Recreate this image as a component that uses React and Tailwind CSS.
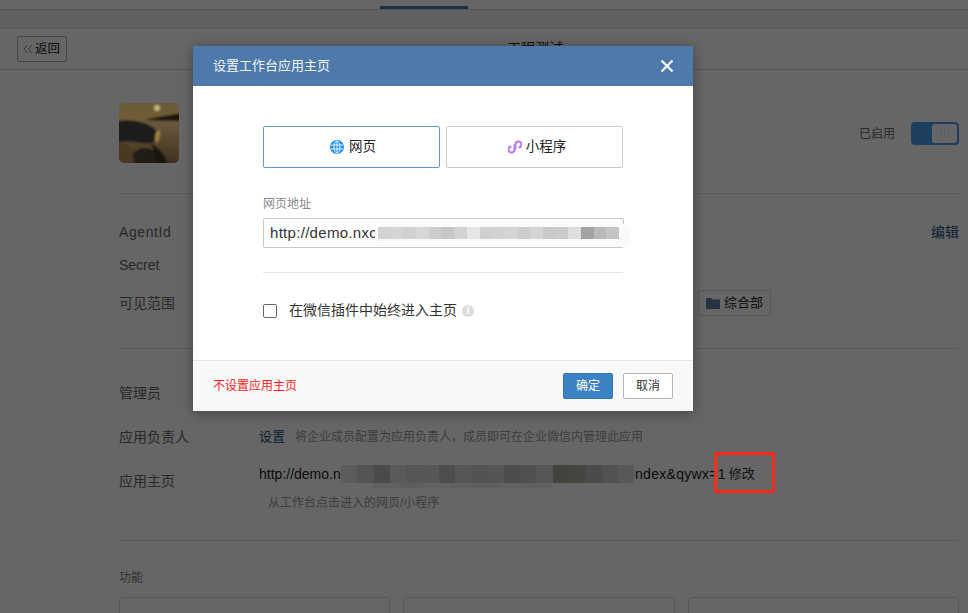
const font = { fontFamily: '"Liberation Sans", "Noto Sans CJK SC", sans-serif' };

const inputBlur = ['#d3d3d3', '#d5d5d5', '#d0d0d0', '#d8d8d8', '#cdcdcd', '#c6c6c6', '#d2d2d2', '#e6e6e6', '#cfcfcf', '#d1d1d1', '#d5d5d5', '#cdcdcd', '#d5d5d5', '#c9c9c9', '#cbcbcb', '#dedede', '#a3a3a3', '#b9b9b9', '#c4c4c4'];
// these sit under the dark overlay, so they are much lighter than they end up looking
const pageBlur = ['#e6e6e6', '#d2d2d2', '#bcbcbc', '#e0e0e0', '#d6d6d6', '#dadada', '#c2c2c2', '#d8d8d8', '#d0d0d0', '#d4d4d4', '#bfbfbf', '#c8c8c8', '#d8d8d8', '#a9a596', '#b0aca0', '#bcbcbc', '#cccccc', '#dcdcdc'];
const pageBlurLow = ['#ffffff', '#f0f0f0', '#ececec', '#f4f4f4', '#eeeeee', '#eaeaea', '#f2f2f2', '#eeeeee', '#ffffff'];

function Mosaic({ cells, className }) {
  return (
    <div className={`absolute flex ${className}`}>
      {cells.map((c, i) => (
        <span key={i} className="flex-1 h-full" style={{ backgroundColor: c }} />
      ))}
    </div>
  );
}

function Row({ label, children, className = '' }) {
  return (
    <div className={`flex items-center ${className}`}>
      <span className="w-[140px] text-[14px] text-[#666]">{label}</span>
      <div className="flex-1 flex items-center">{children}</div>
    </div>
  );
}

function SunsetIcon() {
  return (
    <svg width="60" height="60" viewBox="0 0 60 60" className="relative z-10 rounded-[5px]">
      <defs>
        <linearGradient id="sky" x1="0" y1="0" x2="0" y2="1">
          <stop offset="0" stopColor="#6a5a3a" />
          <stop offset="1" stopColor="#7d5f28" />
        </linearGradient>
        <linearGradient id="water" x1="0" y1="0" x2="0" y2="1">
          <stop offset="0" stopColor="#6b5a3e" />
          <stop offset="1" stopColor="#3e2f1c" />
        </linearGradient>
        <filter id="soft">
          <feGaussianBlur stdDeviation="1" />
        </filter>
      </defs>
      <g filter="url(#soft)">
        <rect x="-3" y="-3" width="66" height="66" fill="url(#sky)" />
        <circle cx="38" cy="5" r="3" fill="#c8b078" />
        <path d="M-3 18 L63 18 L63 63 L-3 63 Z" fill="url(#water)" />
        <path d="M26 17 C36 14 46 13 63 10 L63 18 C50 18 40 18 26 17 Z" fill="#1b1510" />
        <path d="M-3 18 C12 16 26 18 36 26 C40 32 38 38 32 40 C24 42 10 36 -3 40 Z" fill="#1c1a1c" />
        <path d="M14 50 C24 42 36 42 48 63 L10 63 Z" fill="#231a12" />
        <path d="M32 40 C38 44 46 50 50 63 L40 63 Z" fill="#19140e" />
        <path d="M-3 40 C8 38 14 42 16 63 L-3 63 Z" fill="#4a3820" />
        <path d="M38 28 C42 24 42 34 38 40 C35 38 36 32 38 28 Z" fill="#a8823c" />
      </g>
    </svg>
  );
}

export default function App() {
  return (
    <div style={font} className="relative w-[968px] h-[613px] overflow-hidden bg-white">
      {/* page behind the dialog */}
      <div className="h-[10px] bg-white border-b border-[#d0d0d0] flex pl-[380px]">
        <div className="w-[88px] h-[3px] mt-[6px] bg-[#4478ba]" />
      </div>
      <div className="h-[19px] bg-[#edf1ee] border-b border-[#e4e4e4]" />
      <div className="relative h-[41px] bg-white border-b border-[#d8d8d8] flex items-center pl-[17px]">
        <button className="w-[50px] h-[26px] border border-[#b0b0b0] rounded-[2px] flex items-center pl-[5px] gap-[2px] text-[12.5px] text-[#222]">
          <svg width="10" height="10" viewBox="0 0 10 10" fill="none" stroke="#888" strokeWidth="1">
            <path d="M4.5 1 L1 5 L4.5 9 M9 1 L5.5 5 L9 9" />
          </svg>
          返回
        </button>
        <span className="absolute left-[507px] top-[9px] text-[14px] text-[#222]">工程测试</span>
      </div>

      <div className="pl-[119px] pr-[9px]">
        <div className="h-[124px] pt-[33px] flex justify-between border-b border-[#e4e4e4]">
          <SunsetIcon />
          <div className="flex items-center h-[22px] mt-[19px] gap-[16px]">
            <span className="text-[12px] text-[#666] pt-[2px]">已启用</span>
            <div className="w-[48px] h-[23px] bg-[#4a9ef0] rounded-[4px] p-[2px] flex justify-end">
              <div className="w-[25px] h-full bg-white rounded-[3px] flex items-center justify-center gap-[3px]">
                <span className="w-px h-[10px] bg-[#e4e4e4]" />
                <span className="w-px h-[10px] bg-[#e4e4e4]" />
                <span className="w-px h-[10px] bg-[#e4e4e4]" />
              </div>
            </div>
          </div>
        </div>

        <div className="h-[155px] pt-[27px] border-b border-[#e4e4e4]">
          <Row label={<span className="tracking-[0.6px]">AgentId</span>} className="h-[22px]">
            <span className="ml-auto text-[14px] text-[#1a4d80]">编辑</span>
          </Row>
          <Row label="Secret" className="h-[22px] mt-[11px]" />
          <div className="flex items-center h-[26px] mt-[14px]">
            <span className="w-[579px] text-[14px] text-[#666] pt-px">可见范围</span>
            <span className="h-[26px] w-[73px] border border-[#dcdcdc] rounded-[2px] flex items-center pl-[7px] gap-[4px] text-[13px] text-[#222]">
              <svg width="14" height="12" viewBox="0 0 14 12">
                <path d="M0 1 h5.5 l1 1.5 H14 V12 H0 Z" fill="#5f7fa8" />
              </svg>
              综合部
            </span>
          </div>
        </div>

        <div className="h-[192px] pt-[33px] border-b border-[#e4e4e4]">
          <Row label="管理员" className="h-[22px]" />
          <Row label="应用负责人" className="h-[22px] mt-[22px]">
            <span className="text-[13px] text-[#1a4d80]">设置</span>
            <span className="ml-[10px] text-[12px] text-[#999]">将企业成员配置为应用负责人，成员即可在企业微信内管理此应用</span>
          </Row>
          <div className="flex mt-[16px]">
            <span className="w-[140px] mt-[6px] text-[14px] text-[#666] leading-[22px]">应用主页</span>
            <div className="flex-1 relative">
              <div className="h-[20px] flex items-center text-[14px] text-[#222]">
                <span className="w-[376px]">http://demo.n</span>
                <span className="tracking-[0.3px]">ndex&amp;qywx=1</span>
                <span className="ml-[3px] text-[13px] text-[#333]">修改</span>
              </div>
              <p className="mt-[10px] ml-[9px] text-[12px] text-[#999]">从工作台点击进入的网页/小程序</p>
              <Mosaic cells={pageBlurLow} className="left-[88px] top-[19px] w-[230px] h-[5px]" />
              <Mosaic cells={pageBlur} className="left-[82px] top-px w-[293px] h-[18px]" />
            </div>
          </div>
        </div>

        <p className="mt-[28px] text-[12px] text-[#777]">功能</p>
        <div className="grid grid-cols-3 gap-[13px] mt-[10px] w-[840px]">
          <div className="h-[60px] border border-[#dddddd] rounded-[4px]" />
          <div className="h-[60px] border border-[#dddddd] rounded-[4px]" />
          <div className="h-[60px] border border-[#dddddd] rounded-[4px]" />
        </div>
      </div>

      {/* overlay */}
      <div className="absolute inset-0 bg-black/60" />

      {/* red annotation box */}
      <div className="absolute left-[714px] top-[452px] w-[61px] h-[41px] border-[3px] border-[#ff2a1a] rounded-[2px]" />

      {/* dialog */}
      <div className="absolute left-[193px] top-[46px] w-[500px] h-[365px] bg-white flex flex-col shadow-[0_2px_12px_rgba(0,0,0,0.35)]">
        <div className="h-[40px] bg-[#4e79ab] flex items-center justify-between pl-[20px] pr-[19px]">
          <span className="text-[13px] text-[#f2f5f9]">设置工作台应用主页</span>
          <svg width="14" height="14" viewBox="0 0 14 14" stroke="#fff" strokeWidth="2.2">
            <path d="M1.5 1.5 L12.5 12.5 M12.5 1.5 L1.5 12.5" />
          </svg>
        </div>

        <div className="flex-1 pt-[40px] pl-[70px] pr-[70px]">
          <div className="flex gap-[6px]">
            <button className="w-[177px] h-[42px] pl-[3px] border border-[#6a95c8] rounded-[2px] flex items-center justify-center gap-[5px] text-[13.5px] text-[#222]">
              <svg width="14" height="14" viewBox="0 0 14 14" fill="none">
                <circle cx="7" cy="7" r="7" fill="#1e90ff" />
                <g stroke="#fff" strokeWidth="0.9">
                  <ellipse cx="7" cy="7" rx="3" ry="6" />
                  <path d="M7 1 V13 M1 5 H13 M1 9 H13" />
                </g>
              </svg>
              网页
            </button>
            <button className="w-[177px] h-[42px] pl-[5px] border border-[#cccccc] rounded-[2px] flex items-center justify-center gap-[4px] text-[13.5px] text-[#222]">
              <svg width="14" height="14" viewBox="0 0 14 14" fill="none" stroke="#b57bf5" strokeWidth="2">
                <path d="M6.5 4.5 V9.5 A3 3 0 1 1 3.5 6.5 M7.5 9.5 V4.5 A3 3 0 1 1 10.5 7.5" />
              </svg>
              小程序
            </button>
          </div>

          <p className="mt-[27px] text-[12px] leading-[18px] text-[#888]">网页地址</p>
          <div className="relative mt-[5px] w-[361px] h-[30px] border border-[#c8c8c8] rounded-[2px] flex items-center pl-[6px] text-[15px] tracking-[0.3px] text-[#333]">
            http://demo.nxc
            <div className="absolute left-[111px] top-[5px] w-[256px] h-[23px] bg-[#fafafa] rounded-[8px]" />
            <Mosaic cells={inputBlur} className="left-[114px] top-[8px] w-[241px] h-[12px]" />
          </div>

          <div className="mt-[24px] h-px bg-[#e2e2e2]" />

          <div className="mt-[27px] flex items-center text-[14px] text-[#333]">
            <span className="w-[14px] h-[14px] border border-[#666] rounded-[2px]" />
            <span className="ml-[12px]">在微信插件中始终进入主页</span>
            <span className="ml-[5px] w-[12px] h-[12px] rounded-full bg-[#dddddd] text-white text-[10px] italic font-bold leading-[12px] text-center">i</span>
          </div>
        </div>

        <div className="h-[51px] bg-[#f8f8f8] border-t border-[#e4e4e4] flex items-center pl-[20px] pr-[20px]">
          <span className="text-[12px] text-[#ff1a1a]">不设置应用主页</span>
          <button className="ml-auto w-[50px] h-[26px] rounded-[2px] bg-[#3b82c4] border border-[#3575b0] text-white text-[12px]">确定</button>
          <button className="ml-[10px] w-[50px] h-[26px] rounded-[2px] bg-white border border-[#b5b5b5] text-[#333] text-[12px]">取消</button>
        </div>
      </div>
    </div>
  );
}
